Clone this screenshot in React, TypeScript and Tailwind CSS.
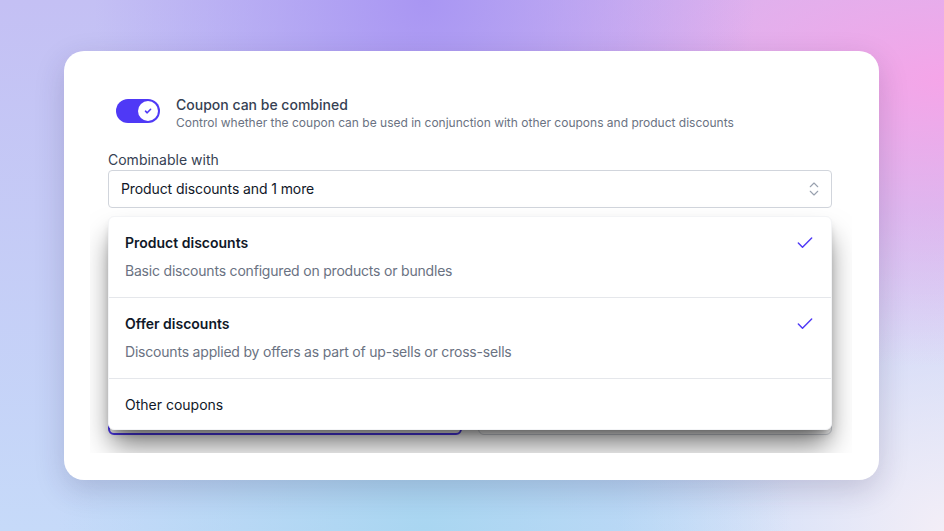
import { Check, ChevronsUpDown } from "lucide-react";

const options = [
  {
    title: "Product discounts",
    description: "Basic discounts configured on products or bundles",
    selected: true,
  },
  {
    title: "Offer discounts",
    description: "Discounts applied by offers as part of up-sells or cross-sells",
    selected: true,
  },
  { title: "Other coupons", selected: false },
];

export default function App() {
  return (
    <div className="flex h-[531px] w-full items-center overflow-hidden bg-[image:radial-gradient(ellipse_at_45%_0%,#a996f3_0%,transparent_45%),radial-gradient(ellipse_at_100%_15%,#f5a5e8_0%,transparent_45%),radial-gradient(ellipse_at_45%_100%,#a9d6f1_0%,transparent_50%),radial-gradient(circle_at_100%_100%,#f3eef7_0%,transparent_30%),linear-gradient(180deg,#c4c0f4_0%,#c6daf9_100%)] pl-16 font-['Inter',sans-serif]">
      {/* Card */}
      <div className="w-[815px] rounded-[20px] bg-white pt-5 pr-[27px] pb-[27px] pl-[26px] shadow-[0_10px_30px_rgba(40,30,80,0.18)]">
        {/* Clipped form area */}
        <div className="overflow-hidden pt-6 pr-5 pb-[18px] pl-[18px]">
          {/* Toggle row */}
          <div className="flex items-start gap-4 pl-2">
            <button className="mt-1 flex h-6 w-11 shrink-0 items-center rounded-full bg-indigo-600 p-0.5">
              <span className="flex h-5 w-5 translate-x-5 items-center justify-center rounded-full bg-white">
                <svg viewBox="0 0 12 12" className="h-3 w-3 text-indigo-600" fill="none">
                  <path d="M3.5 6.2 5.2 7.8 8.6 4.3" stroke="currentColor" strokeWidth="1.6" strokeLinecap="round" strokeLinejoin="round" />
                </svg>
              </span>
            </button>
            <div>
              <p className="text-sm leading-5 font-medium text-gray-700">Coupon can be combined</p>
              <p className="text-xs leading-4 text-gray-500">
                Control whether the coupon can be used in conjunction with other coupons and product discounts
              </p>
            </div>
          </div>

          {/* Combinable with select */}
          <label className="mt-[19px] block text-sm leading-5 text-gray-700">Combinable with</label>
          <div className="relative">
            <div className="flex h-[38px] items-center justify-between rounded-sm border border-gray-300 bg-white pr-2 pl-3">
              <span className="text-sm tracking-[-0.1px] text-gray-900">Product discounts and 1 more</span>
              <ChevronsUpDown size={18} strokeWidth={1.5} className="text-gray-400" />
            </div>

            {/* Open listbox */}
            <div className="absolute top-full right-0 left-0 z-10 mt-2 rounded-md border border-gray-100 bg-white shadow-[0_18px_28px_-4px_rgba(0,0,0,0.55),0_6px_10px_-4px_rgba(0,0,0,0.3)]">
              {options.map((o, i) => (
                <div
                  key={o.title}
                  className={`px-4 py-4 ${i < options.length - 1 ? "border-b border-gray-200" : "pb-[14px]"}`}
                >
                  <div className="flex items-center justify-between">
                    <span className={`text-sm leading-5 text-gray-900 ${o.description ? "font-semibold" : ""}`}>
                      {o.title}
                    </span>
                    {o.selected && <Check size={20} strokeWidth={1.75} className="text-indigo-600" />}
                  </div>
                  {o.description && (
                    <p className="mt-2 text-sm leading-5 tracking-[-0.2px] text-gray-500">{o.description}</p>
                  )}
                </div>
              ))}
            </div>
          </div>

          {/* Action buttons behind the listbox */}
          <div className="mt-[189px] grid grid-cols-2 gap-4">
            <button className="h-[38px] rounded-md border-2 border-indigo-600 bg-white" />
            <button className="h-[38px] rounded-md border border-gray-300 bg-white" />
          </div>
        </div>
      </div>
    </div>
  );
}
